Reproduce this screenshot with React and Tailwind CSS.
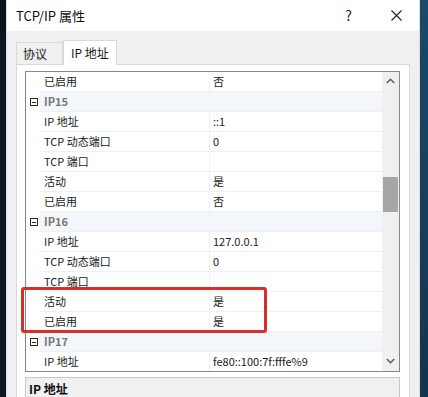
import React from "react";

const rows = [
  { n: "已启用", v: "否" },
  { g: "IP15" },
  { n: "IP 地址", v: "::1" },
  { n: "TCP 动态端口", v: "0" },
  { n: "TCP 端口", v: "" },
  { n: "活动", v: "是" },
  { n: "已启用", v: "否" },
  { g: "IP16" },
  { n: "IP 地址", v: "127.0.0.1" },
  { n: "TCP 动态端口", v: "0" },
  { n: "TCP 端口", v: "" },
  { n: "活动", v: "是" },
  { n: "已启用", v: "是" },
  { g: "IP17" },
  { n: "IP 地址", v: "fe80::100:7f:fffe%9" },
];

function Row({ r }) {
  if (r.g) {
    return (
      <div className="flex h-[20px] shrink-0">
        <div className="w-[14px] shrink-0 flex items-center justify-center bg-white">
          <div className="w-[8px] h-[8px] border border-[#2a2a2a] flex items-center justify-center ml-[2px]">
            <div className="w-[4px] h-px bg-[#2a2a2a]"></div>
          </div>
        </div>
        <div className="flex-1 bg-[#f3f6fb] border-b border-[#eef0f3] flex items-center pl-[4px] font-bold text-[#777777] text-[11px]">
          {r.g}
        </div>
      </div>
    );
  }
  return (
    <div className="flex h-[20px] shrink-0">
      <div className="w-[14px] shrink-0 bg-white"></div>
      <div className="w-[170px] shrink-0 border-b border-r border-[#f0f0f0] flex items-center pl-[4px] text-[11px] text-[#1a1a1a]">
        {r.n}
      </div>
      <div className="flex-1 border-b border-[#f0f0f0] flex items-center pl-[3px] text-[11px] text-[#1a1a1a]">
        {r.v}
      </div>
    </div>
  );
}

export default function App() {
  return (
    <div
      className="relative w-[428px] h-[397px] overflow-hidden flex bg-[#0c1a26]"
      style={{ fontFamily: '"Microsoft YaHei", "Noto Sans CJK SC", "Noto Sans", sans-serif' }}
    >
      <div className="w-[6px] shrink-0 bg-[#0a1520]"></div>
      <div className="w-[414px] shrink-0 flex flex-col border-x border-[#dcdcdc] bg-[#f0f0f0]">
        <div className="h-[31px] shrink-0 bg-white flex items-center pl-[9px] text-[13px] text-[#111111]">
          <span>TCP/IP 属性</span>
          <span className="ml-auto mr-[39px] text-[14px] text-[#222222]">?</span>
          <svg width="11" height="11" viewBox="0 0 11 11" className="mr-[17px]">
            <path d="M0.5 0.5 L10.5 10.5 M10.5 0.5 L0.5 10.5" stroke="#222222" strokeWidth="1.1" />
          </svg>
        </div>
        <div className="flex-1 flex flex-col pt-[9px] px-[9px]">
          <div className="h-[24px] shrink-0 flex items-end">
            <div className="w-[47px] h-[22px] border border-b-0 border-[#d9d9d9] bg-[#f0f0f0] flex items-center pl-[6px] text-[12px] text-[#1a1a1a]">
              协议
            </div>
            <div className="relative z-10 -mb-px w-[54px] h-[25px] border border-b-0 border-[#d9d9d9] bg-white flex items-center pl-[7px] text-[12px] text-[#1a1a1a]">
              IP 地址
            </div>
          </div>
          <div className="flex-1 border border-[#d9d9d9] bg-white pt-[6px] pl-[8px] pr-[9px]">
            <div className="h-[301px] border border-[#828790] flex overflow-hidden bg-white">
              <div className="flex-1 flex flex-col overflow-hidden">
                {rows.map((r, i) => (
                  <Row key={i} r={r} />
                ))}
              </div>
              <div className="w-[17px] shrink-0 bg-[#f0f0f0] flex flex-col">
                <div className="h-[17px] flex items-center justify-center">
                  <svg width="9" height="6" viewBox="0 0 9 6">
                    <path d="M0.8 5 L4.5 1.3 L8.2 5" stroke="#606060" strokeWidth="1.6" fill="none" />
                  </svg>
                </div>
                <div className="mt-[88px] mx-px h-[35px] bg-[#a6a6a6]"></div>
                <div className="flex-1"></div>
                <div className="h-[17px] flex items-center justify-center mb-[2px]">
                  <svg width="9" height="6" viewBox="0 0 9 6">
                    <path d="M0.8 1 L4.5 4.7 L8.2 1" stroke="#606060" strokeWidth="1.6" fill="none" />
                  </svg>
                </div>
              </div>
            </div>
            <div className="mt-[5px] h-[40px] border border-[#c8c8c8] bg-[#f0f0f0] pl-[3px] pt-[2px] text-[12px] font-bold text-[#111111]">
              IP 地址
            </div>
          </div>
        </div>
      </div>
      <div className="flex-1 bg-gradient-to-b from-[#1b4a6b] to-[#14344d]"></div>
      <div className="absolute left-[21px] top-[287px] w-[246px] h-[46px] border-[3px] border-[#d3322b] rounded-[3px]"></div>
    </div>
  );
}
